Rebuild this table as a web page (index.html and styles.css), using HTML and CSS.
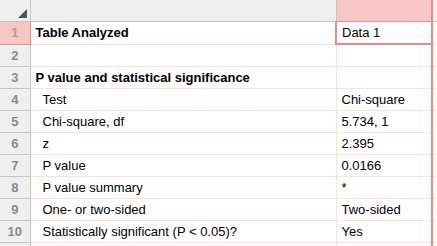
FILE: index.html
```html
<!DOCTYPE html>
<html>
<head>
  <title>Chi-square results</title>
  <link rel="stylesheet" href="styles.css">
</head>
<body>

  <div class="frame">
  <table class="sheet">
    <colgroup>
      <col class="c-num">
      <col class="c-a">
      <col class="c-b">
      <col class="c-rest">
    </colgroup>
    <tr class="colhead">
      <th class="corner"><span class="tri"></span></th>
      <th></th>
      <th class="active-col"></th>
      <th class="rest"></th>
    </tr>
    <tr>
      <th class="rownum active-row">1</th>
      <td class="bold">Table Analyzed</td>
      <td class="selected">Data 1</td>
      <td class="rest"></td>
    </tr>
    <tr>
      <th class="rownum">2</th>
      <td></td>
      <td class="colb"></td>
      <td class="rest"></td>
    </tr>
    <tr>
      <th class="rownum">3</th>
      <td class="bold">P value and statistical significance</td>
      <td class="colb"></td>
      <td class="rest"></td>
    </tr>
    <tr>
      <th class="rownum">4</th>
      <td class="indent">Test</td>
      <td class="colb">Chi-square</td>
      <td class="rest"></td>
    </tr>
    <tr>
      <th class="rownum">5</th>
      <td class="indent">Chi-square, df</td>
      <td class="colb">5.734, 1</td>
      <td class="rest"></td>
    </tr>
    <tr>
      <th class="rownum">6</th>
      <td class="indent">z</td>
      <td class="colb">2.395</td>
      <td class="rest"></td>
    </tr>
    <tr>
      <th class="rownum">7</th>
      <td class="indent">P value</td>
      <td class="colb">0.0166</td>
      <td class="rest"></td>
    </tr>
    <tr>
      <th class="rownum">8</th>
      <td class="indent">P value summary</td>
      <td class="colb">*</td>
      <td class="rest"></td>
    </tr>
    <tr>
      <th class="rownum">9</th>
      <td class="indent">One- or two-sided</td>
      <td class="colb">Two-sided</td>
      <td class="rest"></td>
    </tr>
    <tr>
      <th class="rownum">10</th>
      <td class="indent">Statistically significant (P &lt; 0.05)?</td>
      <td class="colb">Yes</td>
      <td class="rest"></td>
    </tr>
    <tr class="tail">
      <th class="rownum"></th>
      <td></td>
      <td class="colb"></td>
      <td class="rest"></td>
    </tr>
  </table>
  </div>

</body>
</html>
```

FILE: styles.css
```css
html, body {
  margin: 0;
  height: 246px;
  overflow: hidden;
}
body {
  font-family: Arial, "Liberation Sans", sans-serif;
  font-size: 13px;
  color: #000;
  background: #fff;
}
.frame {
  width: 437px;
  height: 246px;
  overflow: hidden;
}
.sheet {
  border-collapse: collapse;
  table-layout: fixed;
  width: 460px;
}
.c-num { width: 30px; }
.c-a { width: 306px; }
.c-b { width: 96px; }
.c-rest { width: 28px; }
.sheet th, .sheet td {
  height: 21px;
  padding: 0 5px;
  border: 1px solid #fde0d6;
  border-left: none;
  white-space: nowrap;
  overflow: hidden;
  text-align: left;
}
.colhead th {
  background: #efefef;
  border-top: none;
  border-bottom: 1px solid #c4c4c4;
  border-right: 1px solid #c4c4c4;
}
.corner {
  position: relative;
}
.tri {
  position: absolute;
  right: 3px;
  bottom: 3px;
  width: 0;
  height: 0;
  border-left: 9px solid transparent;
  border-bottom: 9px solid #555;
}
.sheet .colhead .active-col {
  background: #f7c6c6;
  border-bottom: 1px solid #e98a8a;
  border-right: 2px solid #e98a8a;
}
.sheet .rest {
  border-right: none;
}
.sheet .rownum {
  background: #efefef;
  color: #8a8a8a;
  font-weight: bold;
  text-align: center;
  padding: 0;
  border-right: 1px solid #c4c4c4;
  border-bottom: 1px solid #c4c4c4;
}
.sheet .rownum.active-row {
  background: #f7c6c6;
  color: #c99090;
  border-right: 1px solid #e98a8a;
  border-bottom: 1px solid #e98a8a;
}
.bold {
  font-weight: bold;
}
.sheet td.indent {
  padding-left: 12px;
}
.sheet .colb {
  border-right: 2px solid #e98a8a;
}
.sheet td.selected {
  border: 2px solid #e98a8a;
  border-top: 1px solid #e98a8a;
}
.tail th, .tail td {
  border-bottom: none;
}
```
